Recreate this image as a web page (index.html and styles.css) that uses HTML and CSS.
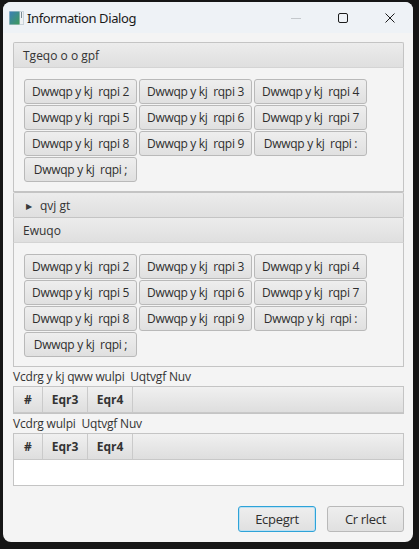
FILE: index.html
```html
<!DOCTYPE html>
<html lang="en">

<head>
    <meta charset="UTF-8">
    <meta name="viewport" content="width=device-width, initial-scale=1.0">
    <title>Information Dialog</title>
    <link rel="stylesheet" href="styles.css">
</head>

<body>
    <div class="window">
        <div class="titlebar">
            <svg class="app-icon" width="15" height="14" viewBox="0 0 15 14">
                <defs>
                    <linearGradient id="ic" x1="0" y1="0" x2="1" y2="1">
                        <stop offset="0" stop-color="#3a7fb8" />
                        <stop offset="1" stop-color="#3e9a5a" />
                    </linearGradient>
                </defs>
                <rect x="0" y="0" width="15" height="14" fill="#c9d3da" />
                <rect x="0.5" y="0.5" width="10" height="13" fill="url(#ic)" />
                <rect x="11" y="1" width="3" height="12" fill="#eef1f3" />
                <rect x="12" y="1" width="1" height="6" fill="#7a8a96" />
            </svg>
            <span class="title">Information Dialog</span>
            <div class="controls">
                <span class="ctl">
                    <svg width="10" height="10" viewBox="0 0 10 10"><path d="M0 5.5h10" stroke="#c4c8cc" stroke-width="1" /></svg>
                </span>
                <span class="ctl">
                    <svg width="10" height="10" viewBox="0 0 10 10"><rect x="0.5" y="0.5" width="9" height="9" rx="1.5" fill="none" stroke="#1c1c1c" stroke-width="1" /></svg>
                </span>
                <span class="ctl">
                    <svg width="10" height="10" viewBox="0 0 10 10"><path d="M0.5 0.5l9 9M9.5 0.5l-9 9" stroke="#1c1c1c" stroke-width="1" /></svg>
                </span>
            </div>
        </div>

        <div class="content">
            <div class="accordion">
                <!-- First pane -->
                <div class="pane">
                    <div class="pane-title">Tgeqo o o gpf</div>
                    <div class="pane-body">
                        <div class="flow">
                            <button class="btn">Dwwqp y kj  rqpi 2</button>
                            <button class="btn">Dwwqp y kj  rqpi 3</button>
                            <button class="btn">Dwwqp y kj  rqpi 4</button>
                            <button class="btn">Dwwqp y kj  rqpi 5</button>
                            <button class="btn">Dwwqp y kj  rqpi 6</button>
                            <button class="btn">Dwwqp y kj  rqpi 7</button>
                            <button class="btn">Dwwqp y kj  rqpi 8</button>
                            <button class="btn">Dwwqp y kj  rqpi 9</button>
                            <button class="btn">Dwwqp y kj  rqpi :</button>
                            <button class="btn">Dwwqp y kj  rqpi ;</button>
                        </div>
                    </div>
                </div>

                <!-- Collapsed pane -->
                <div class="pane">
                    <div class="pane-title"><span class="arrow">&#9654;</span>qvj gt</div>
                </div>

                <!-- Third pane -->
                <div class="pane">
                    <div class="pane-title">Ewuqo</div>
                    <div class="pane-body">
                        <div class="flow">
                            <button class="btn">Dwwqp y kj  rqpi 2</button>
                            <button class="btn">Dwwqp y kj  rqpi 3</button>
                            <button class="btn">Dwwqp y kj  rqpi 4</button>
                            <button class="btn">Dwwqp y kj  rqpi 5</button>
                            <button class="btn">Dwwqp y kj  rqpi 6</button>
                            <button class="btn">Dwwqp y kj  rqpi 7</button>
                            <button class="btn">Dwwqp y kj  rqpi 8</button>
                            <button class="btn">Dwwqp y kj  rqpi 9</button>
                            <button class="btn">Dwwqp y kj  rqpi :</button>
                            <button class="btn">Dwwqp y kj  rqpi ;</button>
                        </div>
                    </div>
                </div>
            </div>

            <div class="caption">Vcdrg y kj qww wulpi  Uqtvgf Nuv</div>
            <div class="table">
                <div class="table-head">
                    <div class="col col-num">#</div>
                    <div class="col col-w">Eqr3</div>
                    <div class="col col-w">Eqr4</div>
                    <div class="col col-fill"></div>
                </div>
            </div>

            <div class="caption">Vcdrg wulpi  Uqtvgf Nuv</div>
            <div class="table">
                <div class="table-head">
                    <div class="col col-num">#</div>
                    <div class="col col-w">Eqr3</div>
                    <div class="col col-w">Eqr4</div>
                    <div class="col col-fill"></div>
                </div>
                <div class="table-body"></div>
            </div>

            <div class="button-bar">
                <button class="btn dlg-btn default">Ecpegrt</button>
                <button class="btn dlg-btn">Cr rlect</button>
            </div>
        </div>
    </div>
</body>

</html>
```

FILE: styles.css
```css
body {
    margin: 0;
    background-color: #161616;
    padding: 2px 6px 7px 3px;
    font-family: "Open Sans", "Noto Sans", Arial, sans-serif;
}

.window {
    width: 410px;
    height: 540px;
    background-color: #f4f4f4;
    border-radius: 8px;
    overflow: hidden;
    display: flex;
    flex-direction: column;
}

.titlebar {
    height: 31px;
    background-color: #eef2f6;
    display: flex;
    align-items: center;
    padding-left: 6px;
}

.app-icon {
    flex-shrink: 0;
    margin-right: 3px;
}

.title {
    font-family: "Noto Sans", "Open Sans", sans-serif;
    font-size: 13px;
    letter-spacing: -0.4px;
    color: #1a1a1a;
    flex: 1;
}

.controls {
    display: flex;
    height: 100%;
}

.ctl {
    width: 47px;
    display: flex;
    align-items: center;
    justify-content: center;
}

.content {
    flex: 1;
    display: flex;
    flex-direction: column;
    padding: 9px 9px 10px 10px;
}

.accordion {
    display: flex;
    flex-direction: column;
}

.pane-title {
    height: 24px;
    display: flex;
    align-items: center;
    padding-left: 9px;
    font-size: 12px;
    color: #333;
    background: linear-gradient(#ececec, #dfdfdf);
    border: 1px solid #c4c4c4;
    border-bottom: none;
    border-radius: 2px 2px 0 0;
}

.arrow {
    font-size: 8px;
    margin-left: 3px;
    margin-right: 8px;
    color: #3a3a3a;
}

.pane-body {
    border: 1px solid #c4c4c4;
    border-top: 1px solid #d4d4d4;
    padding: 11px 10px 9px 10px;
    background-color: #f4f4f4;
}

.flow {
    display: flex;
    flex-wrap: wrap;
    gap: 1px 2px;
}

.btn {
    width: 113px;
    height: 25px;
    padding: 0;
    font-family: "Open Sans", "Noto Sans", Arial, sans-serif;
    font-size: 12px;
    letter-spacing: -0.3px;
    color: #2e2e2e;
    white-space: pre;
    background: linear-gradient(#eeeeee, #e0e0e0);
    border: 1px solid #b9b9b9;
    border-radius: 3px;
}

.caption {
    font-size: 12px;
    color: #333;
    letter-spacing: -0.2px;
    height: 19px;
    line-height: 19px;
    white-space: pre;
}

.table {
    border: 1px solid #c4c4c4;
    background-color: #fff;
}

.table-head {
    display: flex;
    height: 25px;
    background: linear-gradient(#f0f0f0, #dedede);
    border-bottom: 1px solid #c8c8c8;
}

.col {
    display: flex;
    align-items: center;
    justify-content: center;
    font-size: 12px;
    font-weight: bold;
    color: #333;
    border-right: 1px solid #cacaca;
}

.col-num {
    width: 28px;
}

.col-w {
    width: 44px;
}

.col-fill {
    flex: 1;
    border-right: none;
}

.table-body {
    height: 25px;
    background-color: #fff;
}

.button-bar {
    margin-top: auto;
    display: flex;
    justify-content: flex-end;
    gap: 11px;
}

.dlg-btn {
    width: 77px;
    height: 26px;
    font-size: 13px;
}

.default {
    width: 78px;
    border: 1px solid #2ea3d8;
    box-shadow: inset 0 0 0 1px #bde0f2;
}
```
